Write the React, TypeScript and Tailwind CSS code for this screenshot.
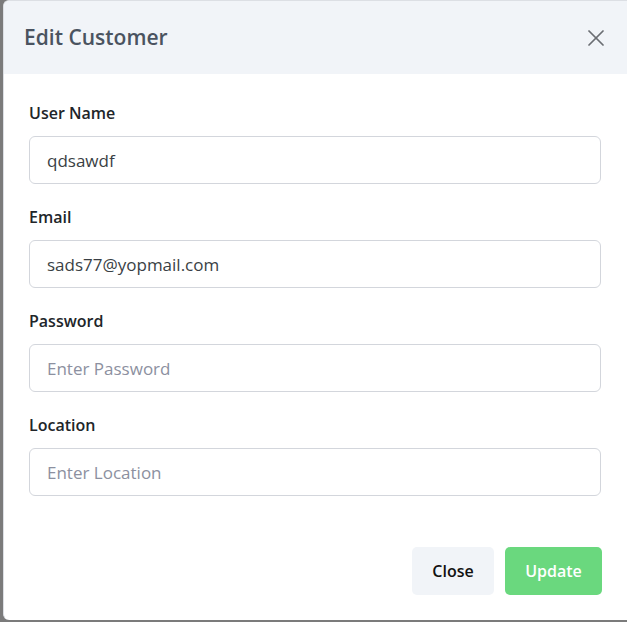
import { X } from "lucide-react"

const fields = [
  { label: "User Name", value: "qdsawdf", placeholder: "Enter User Name" },
  { label: "Email", value: "sads77@yopmail.com", placeholder: "Enter Email" },
  { label: "Password", value: "", placeholder: "Enter Password" },
  { label: "Location", value: "", placeholder: "Enter Location" },
]

const Field = ({ label, value, placeholder }: { label: string; value: string; placeholder: string }) => (
  <div className="mb-[21px] flex flex-col">
    <label className="mb-[11px] text-[16px] leading-6 font-semibold text-[#212529]">{label}</label>
    <input
      defaultValue={value}
      placeholder={placeholder}
      className="h-[48px] w-full rounded-[6px] border border-[#d3d6dc] bg-white px-[17px] text-[17px] text-[#3a3f45] outline-none placeholder:text-[#8c90a0]"
    />
  </div>
)

export default function App() {
  return (
    <div
      className="flex h-[622px] w-[627px] overflow-hidden bg-[#7b7b7b]"
      style={{ fontFamily: '"Open Sans", "Noto Sans", sans-serif' }}
    >
      <div className="w-[3px] shrink-0" />
      <div className="mb-[2px] flex flex-1 flex-col overflow-hidden rounded-l-[6px] border-t border-l border-[#dcdfe4] bg-white">
        <div className="flex h-[73px] shrink-0 items-center justify-between bg-[#f1f4f8] pr-[17px] pl-[20px]">
          <h2 className="text-[21px] font-semibold text-[#4a5360]">Edit Customer</h2>
          <X className="h-[28px] w-[28px] text-[#6b6e73]" strokeWidth={1.5} />
        </div>
        <div className="flex flex-col pt-[27px] pr-[26px] pl-[25px]">
          {fields.map((f) => (
            <Field key={f.label} {...f} />
          ))}
        </div>
        <div className="flex justify-end gap-[11px] px-[25px] pt-[30px]">
          <button className="h-[48px] w-[82px] rounded-[5px] bg-[#f1f4f8] text-[16px] font-semibold text-[#111]">
            Close
          </button>
          <button className="h-[48px] w-[97px] rounded-[5px] bg-[#6ad87e] text-[16px] font-semibold text-white">
            Update
          </button>
        </div>
      </div>
    </div>
  )
}
